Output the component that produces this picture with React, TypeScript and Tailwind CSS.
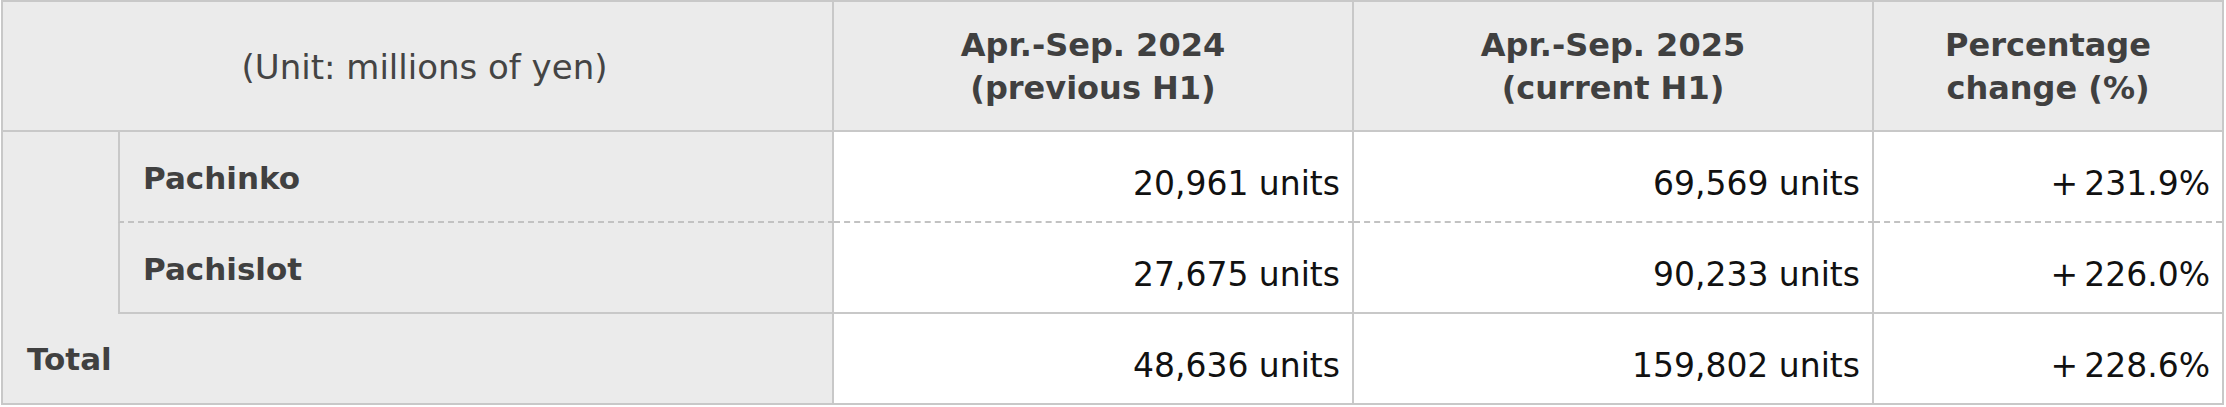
import React from "react";

const line = "border-[#c8c8c8]";

function HeadCell({ top, bottom, last }: { top: string; bottom: string; last?: boolean }) {
  return (
    <div
      className={`flex flex-col items-center justify-center pt-[2px] text-[32px] font-bold leading-[43px] text-[#404040] ${line} ${
        last ? "flex-1" : "w-[520px] border-r-2"
      }`}
    >
      <span>{top}</span>
      <span>{bottom}</span>
    </div>
  );
}

function Num({ value, last, bottom }: { value: React.ReactNode; last?: boolean; bottom?: "dashed" | "solid" }) {
  return (
    <div
      className={`flex items-center justify-end bg-white pr-[12px] pt-[14px] text-[33px] text-[#111] ${line} ${
        last ? "flex-1" : "w-[520px] border-r-2"
      } ${bottom ? "border-b-2" : ""} ${bottom === "dashed" ? "[border-bottom-style:dashed] border-b-[#c2c2c2]" : ""}`}
    >
      {value}
    </div>
  );
}

const pct = (v: string) => (
  <span>
    <span className="mr-[6px]">+</span>
    {v}
  </span>
);

const rows = [
  { label: "Pachinko", prev: "20,961 units", cur: "69,569 units", pct: "231.9%", bottom: "dashed" as const },
  { label: "Pachislot", prev: "27,675 units", cur: "90,233 units", pct: "226.0%", bottom: "solid" as const },
];

export default function App() {
  return (
    <div className="w-[2226px] min-h-[407px] bg-white">
      <div className={`ml-px w-[2223px] border-2 ${line} font-['DejaVu_Sans',sans-serif]`}>
        {/* header */}
        <div className={`flex h-[130px] border-b-2 bg-[#ebebeb] ${line}`}>
          <div className={`flex w-[831px] items-center justify-center border-r-2 pl-[14px] pt-[2px] text-[34px] text-[#444] ${line}`}>
            (Unit: millions of yen)
          </div>
          <HeadCell top="Apr.-Sep. 2024" bottom="(previous H1)" />
          <HeadCell top="Apr.-Sep. 2025" bottom="(current H1)" />
          <HeadCell top="Percentage" bottom="change (%)" last />
        </div>

        {/* breakdown */}
        {rows.map((r) => (
          <div key={r.label} className="flex h-[91px]">
            <div className="w-[115px] bg-[#ebebeb]" />
            <div
              className={`flex w-[716px] items-center border-x-2 border-b-2 bg-[#ebebeb] pl-[23px] pt-[3px] text-[31px] font-bold text-[#404040] ${line} ${
                r.bottom === "dashed" ? "[border-bottom-style:dashed] border-b-[#c2c2c2]" : ""
              }`}
            >
              {r.label}
            </div>
            <Num value={r.prev} bottom={r.bottom} />
            <Num value={r.cur} bottom={r.bottom} />
            <Num value={pct(r.pct)} bottom={r.bottom} last />
          </div>
        ))}

        {/* total */}
        <div className="flex h-[89px]">
          <div className={`flex w-[831px] items-center border-r-2 bg-[#ebebeb] pl-[24px] pt-[2px] text-[31px] font-bold text-[#404040] ${line}`}>
            Total
          </div>
          <Num value="48,636 units" />
          <Num value="159,802 units" />
          <Num value={pct("228.6%")} last />
        </div>
      </div>
    </div>
  );
}
